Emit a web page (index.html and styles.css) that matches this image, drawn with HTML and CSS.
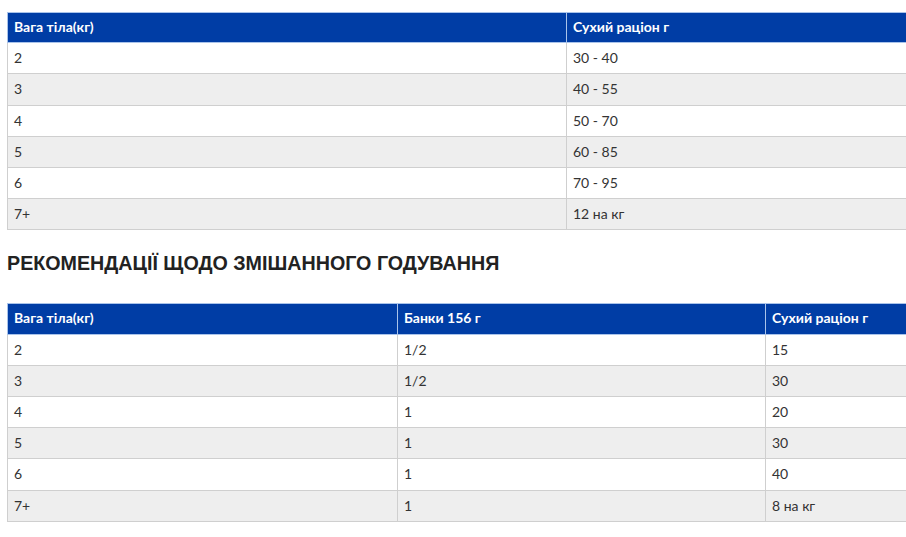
FILE: index.html
```html
<!DOCTYPE html>
<html lang="uk">
<head>
<meta charset="utf-8">
<link rel="stylesheet" href="styles.css">
</head>
<body>
<div class="page">
  <table class="feed feed-two">
    <thead>
      <tr><th class="c1">Вага тіла(кг)</th><th>Сухий раціон г</th></tr>
    </thead>
    <tbody>
      <tr><td>2</td><td>30 - 40</td></tr>
      <tr><td>3</td><td>40 - 55</td></tr>
      <tr><td>4</td><td>50 - 70</td></tr>
      <tr><td>5</td><td>60 - 85</td></tr>
      <tr><td>6</td><td>70 - 95</td></tr>
      <tr><td>7+</td><td>12 на кг</td></tr>
    </tbody>
  </table>
  <h2 class="title">РЕКОМЕНДАЦІЇ ЩОДО ЗМІШАННОГО ГОДУВАННЯ</h2>
  <table class="feed feed-three">
    <thead>
      <tr><th class="m1">Вага тіла(кг)</th><th class="m2">Банки 156 г</th><th>Сухий раціон г</th></tr>
    </thead>
    <tbody>
      <tr><td>2</td><td>1/2</td><td>15</td></tr>
      <tr><td>3</td><td>1/2</td><td>30</td></tr>
      <tr><td>4</td><td>1</td><td>20</td></tr>
      <tr><td>5</td><td>1</td><td>30</td></tr>
      <tr><td>6</td><td>1</td><td>40</td></tr>
      <tr><td>7+</td><td>1</td><td>8 на кг</td></tr>
    </tbody>
  </table>
</div>
</body>
</html>
```
FILE: styles.css
```css
html, body {
  margin: 0;
  padding: 0;
  background: #fff;
  overflow: hidden;
}
.page {
  padding: 12px 0 0 7px;
  width: 900px;
  font-family: Lato, "Liberation Sans", Arial, sans-serif;
  color: #333;
}
.feed {
  width: 900px;
  border-collapse: collapse;
  table-layout: fixed;
  font-size: 14px;
}
.feed th {
  background: #003da5;
  color: #fff;
  font-weight: 700;
  text-align: left;
  padding: 4px 6px 5px;
  line-height: 20.2px;
  border: 1px solid #a9c3ea;
  font-size: 14px;
}
.feed td {
  padding: 5px 6px;
  line-height: 20.2px;
  border: 1px solid #cfcfcf;
  color: #333;
}
.feed tbody tr:nth-child(even) td {
  background: #eeeeee;
}
.c1 { width: 546px; }
.m1 { width: 377px; }
.m2 { width: 355px; }
.title {
  margin: 21px 0 28px;
  font-family: "Liberation Sans", Arial, sans-serif;
  font-size: 19.7px;
  font-weight: 700;
  line-height: 24px;
  color: #222;
}
```
